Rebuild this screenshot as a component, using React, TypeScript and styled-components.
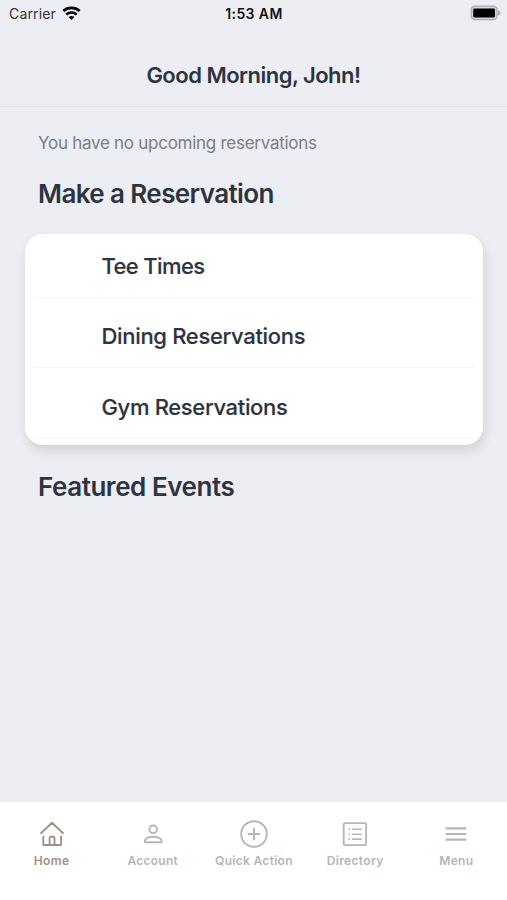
import React from "react";
import styled, { createGlobalStyle } from "styled-components";

const GlobalStyle = createGlobalStyle`
  * { box-sizing: border-box; }
  body { margin: 0; background: #edeef3; }
`;

const Screen = styled.div`
  display: flex;
  flex-direction: column;
  width: 507px;
  height: 900px;
  overflow: hidden;
  background: #edeef3;
  color: #2d3440;
  font-family: Inter, "Liberation Sans", sans-serif;
`;

const StatusBar = styled.div`
  display: grid;
  grid-template-columns: 1fr auto 1fr;
  align-items: center;
  height: 28px;
  padding: 0 6px 0 9px;
  color: #111214;
`;

const Carrier = styled.div`
  display: flex;
  align-items: center;
  gap: 6px;
  font-size: 14px;
  line-height: 28px;
  letter-spacing: 0.15px;
  color: #303236;
`;

const Clock = styled.div`
  font-size: 14px;
  font-weight: 600;
  line-height: 28px;
  letter-spacing: 0.4px;
  margin-left: -2px;
`;

const BatterySlot = styled.div`
  display: flex;
  justify-content: flex-end;
  padding-bottom: 2px;
`;

const WifiSvg = styled.svg`
  margin-top: -2px;
`;

const Header = styled.header`
  display: flex;
  justify-content: center;
  height: 79px;
  padding-top: 33px;
  border-bottom: 1px solid #e3e4e8;
`;

const Title = styled.h1`
  margin: 0;
  font-size: 22px;
  font-weight: 600;
  line-height: 28px;
  letter-spacing: -0.51px;
`;

const Content = styled.main`
  flex: 1;
  padding: 24px 24px 0 25px;
`;

const Notice = styled.p`
  margin: 0 0 0 13px;
  font-size: 17px;
  line-height: 24px;
  letter-spacing: -0.27px;
  color: #7c7d80;
`;

const SectionTitle = styled.h2<{ $top: number; $spacing: number }>`
  margin: ${(p) => p.$top}px 0 0 13px;
  font-size: 26px;
  font-weight: 600;
  line-height: 36px;
  letter-spacing: ${(p) => p.$spacing}px;
`;

const Card = styled.div`
  height: 211px;
  margin-top: 22px;
  padding: 0 9px;
  border-radius: 18px;
  background: #fff;
  box-shadow: 2px 6px 12px rgba(0, 0, 0, 0.12);
`;

const Option = styled.div<{ $height: number; $spacing: number }>`
  display: flex;
  align-items: flex-end;
  height: ${(p) => p.$height}px;
  padding: 0 0 17px 67.5px;
  border-bottom: 1px solid #f4f4f5;
  font-size: 22px;
  font-weight: 500;
  line-height: 28px;
  letter-spacing: ${(p) => p.$spacing}px;
  -webkit-text-stroke: 0.15px currentColor;
`;

const TabBar = styled.nav`
  display: grid;
  grid-template-columns: repeat(5, 1fr);
  height: 98px;
  padding: 18px 0 0 1px;
  background: #fff;
`;

const Tab = styled.div<{ $active?: boolean; $spacing: number }>`
  display: flex;
  flex-direction: column;
  align-items: center;
  color: ${(p) => (p.$active ? "#9c9583" : "#b4b6ba")};
  font-size: 12px;
  font-weight: 600;
  line-height: 16px;
  letter-spacing: ${(p) => p.$spacing}px;
  white-space: nowrap;
`;

const TabIcon = styled.svg`
  width: 28px;
  height: 28px;
  margin-bottom: 5px;
  fill: none;
  stroke: currentColor;
  stroke-width: 1.9;
  stroke-linecap: round;
  stroke-linejoin: round;
`;

const options = [
  { label: "Tee Times", height: 64, spacing: -0.62 },
  { label: "Dining Reservations", height: 70, spacing: -0.32 },
  { label: "Gym Reservations", height: 71, spacing: -0.34 },
];

const tabs = [
  {
    label: "Home",
    active: true,
    spacing: 0.4,
    icon: <path d="M3 13.2 14 2.7 25 13.2M5.3 16.5V25H23V16.5M11.6 25V18.2Q11.6 16.8 13 16.8H15.1Q16.5 16.8 16.5 18.2V25" />,
  },
  {
    label: "Account",
    spacing: 0.25,
    icon: (
      <>
        <circle cx="14.2" cy="9.3" r="3.8" />
        <path d="M5.9 22.3V20.8C5.9 18.2 10 16.7 14.2 16.7S22.6 18.2 22.6 20.8V22.3Z" />
      </>
    ),
  },
  {
    label: "Quick Action",
    spacing: 0.3,
    icon: (
      <>
        <circle cx="14" cy="14" r="12.8" />
        <path strokeLinecap="butt" d="M14 7.8V20.2M7.8 14H20.2" />
      </>
    ),
  },
  {
    label: "Directory",
    spacing: 0.35,
    icon: (
      <>
        <rect x="2.7" y="3.1" width="22.4" height="22" rx="1.2" />
        <path strokeWidth="1.6" strokeLinecap="butt" d="M7.4 9.2H9.1M11 9.2H20.7M7.4 14.2H9.1M11 14.2H20.7M7.4 19.1H9.1M11 19.1H20.7" />
      </>
    ),
  },
  {
    label: "Menu",
    spacing: 0.3,
    icon: <path strokeLinecap="butt" strokeWidth="2.2" d="M3.6 8.3H24.2M3.6 14H24.2M3.6 19.7H24.2" />,
  },
];

const WifiIcon = () => (
  <WifiSvg width="19" height="15" viewBox="0 0 19 15" fill="none" stroke="#08090a">
    <path strokeWidth="2.7" d="M1.3 5C5.8.9 13.2.9 17.7 5" />
    <path strokeWidth="2.5" d="M4.3 8.5C7.2 5.8 11.8 5.8 14.7 8.5" />
    <path stroke="none" fill="#08090a" d="M6.6 11C8.2 9.6 10.8 9.6 12.4 11L9.5 14.1Z" />
  </WifiSvg>
);

const BatteryIcon = () => (
  <svg width="31" height="16" viewBox="0 0 31 16">
    <rect x="1.2" y="1.2" width="25.8" height="13.4" rx="3.6" fill="#d4d5d7" stroke="#a9aaad" strokeWidth="1.2" />
    <rect x="3.2" y="3.4" width="21.8" height="9" rx="1.3" fill="#000" />
    <path d="M28 5.3Q30.6 6.2 30.6 8T28 10.7Z" fill="#a9aaad" />
  </svg>
);

export default function App() {
  return (
    <>
      <GlobalStyle />
      <Screen>
        <StatusBar>
          <Carrier>
            Carrier
            <WifiIcon />
          </Carrier>
          <Clock>1:53 AM</Clock>
          <BatterySlot>
            <BatteryIcon />
          </BatterySlot>
        </StatusBar>
        <Header>
          <Title>Good Morning, John!</Title>
        </Header>
        <Content>
          <Notice>You have no upcoming reservations</Notice>
          <SectionTitle $top={21} $spacing={-0.6}>Make a Reservation</SectionTitle>
          <Card>
            {options.map((o) => (
              <Option key={o.label} $height={o.height} $spacing={o.spacing}>
                {o.label}
              </Option>
            ))}
          </Card>
          <SectionTitle $top={24} $spacing={-0.45}>Featured Events</SectionTitle>
        </Content>
        <TabBar>
          {tabs.map((t) => (
            <Tab key={t.label} $active={t.active} $spacing={t.spacing}>
              <TabIcon viewBox="0 0 28 28">{t.icon}</TabIcon>
              {t.label}
            </Tab>
          ))}
        </TabBar>
      </Screen>
    </>
  );
}
